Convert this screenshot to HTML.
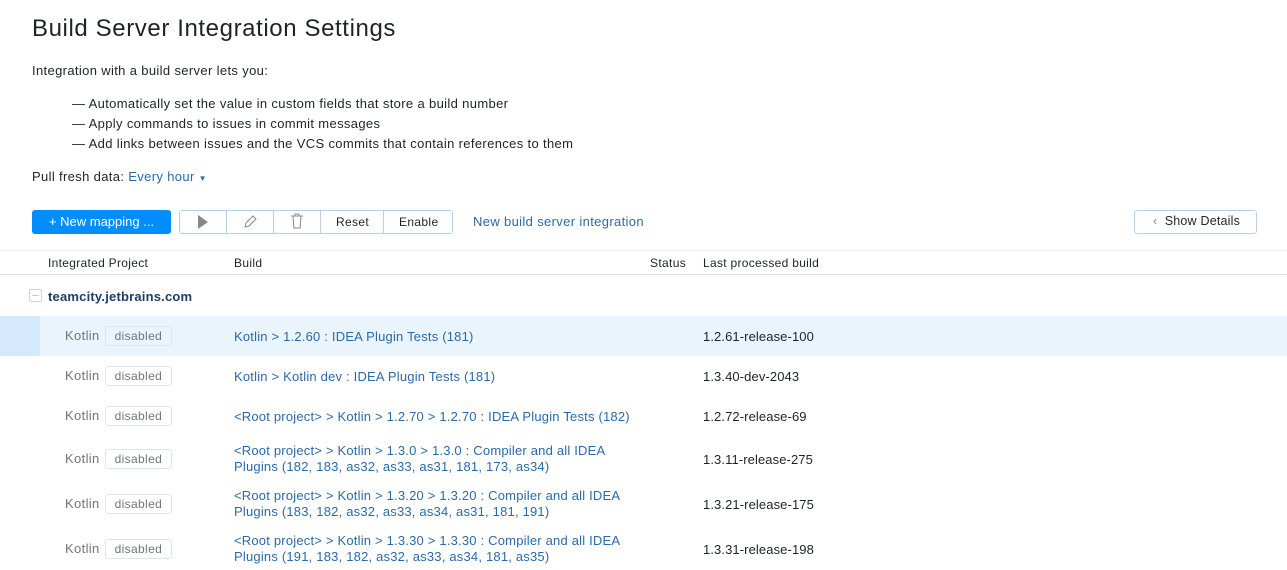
<!DOCTYPE html><html><head><style>
body{margin:0;width:1287px;height:570px;overflow:hidden;background:#fff;font-family:"Liberation Sans",sans-serif;color:#1f2326;font-size:13px;letter-spacing:0.35px}
.a{position:absolute;white-space:nowrap}
h1{position:absolute;left:32px;top:15px;margin:0;font-weight:normal;font-size:24px;letter-spacing:0.6px;color:#1f2326}
.lnk{color:#2a6aa8}
.btn{position:absolute;top:210px;height:22px;border:1px solid #b8cfe4;border-radius:3px;box-sizing:border-box}
.row{position:absolute;left:0;width:1287px}
.dis{display:inline-block;border:1px solid #dfe5eb;border-radius:3px;padding:2px 9px;color:#737577;margin-left:5px;font-size:12px}
.proj{position:absolute;left:65px;color:#737577}
.bd{position:absolute;left:234px;color:#2a6aa8;line-height:16px;letter-spacing:0.2px}
.lp{position:absolute;left:703px;letter-spacing:0.1px}
</style></head><body>
<h1>Build Server Integration Settings</h1>
<div class="a" style="left:32px;top:63px">Integration with a build server lets you:</div>
<div class="a" style="left:72px;top:96px">— Automatically set the value in custom fields that store a build number</div>
<div class="a" style="left:72px;top:116px">— Apply commands to issues in commit messages</div>
<div class="a" style="left:72px;top:136px">— Add links between issues and the VCS commits that contain references to them</div>
<div class="a" style="left:32px;top:169px">Pull fresh data: <span class="lnk">Every hour <span style="font-size:8px">▼</span></span></div>
<div class="a" style="left:32px;top:210px;width:139px;height:24px;background:#008eff;border-radius:3px;color:#fff;line-height:24px;text-align:center;letter-spacing:0">+ New mapping ...</div>
<div class="btn" style="left:179px;width:274px;height:24px"></div>
<div class="a" style="left:226px;top:211px;width:1px;height:22px;background:#b8cfe4"></div>
<div class="a" style="left:273px;top:211px;width:1px;height:22px;background:#b8cfe4"></div>
<div class="a" style="left:320px;top:211px;width:1px;height:22px;background:#b8cfe4"></div>
<div class="a" style="left:383px;top:211px;width:1px;height:22px;background:#b8cfe4"></div>
<svg class="a" style="left:196px;top:214px" width="14" height="16"><path d="M2 1L12 8L2 15Z" fill="#888"/></svg>
<svg class="a" style="left:242px;top:214px" width="16" height="16"><path d="M3 13L4 9L11 2L14 5L7 12Z" fill="none" stroke="#888"/></svg>
<svg class="a" style="left:290px;top:213px" width="14" height="16"><path d="M1 3H13M5 3V1H9V3M3 3L4 15H10L11 3" fill="none" stroke="#888"/></svg>
<div class="a" style="left:336px;top:215px;font-size:12px">Reset</div>
<div class="a" style="left:399px;top:215px;font-size:12px">Enable</div>
<div class="a lnk" style="left:473px;top:214px">New build server integration</div>
<div class="btn" style="left:1134px;width:123px;height:24px"></div>
<div class="a" style="left:1153px;top:214px;font-size:12.5px;letter-spacing:0.2px"><span style="color:#888">‹</span>&nbsp; Show Details</div>
<div class="a" style="left:0;top:250px;width:1287px;height:1px;background:#f2f2f2"></div>
<div class="a" style="left:48px;top:256px;font-size:12px;letter-spacing:0.3px">Integrated Project</div>
<div class="a" style="left:234px;top:256px;font-size:12px">Build</div>
<div class="a" style="left:650px;top:256px;font-size:12px">Status</div>
<div class="a" style="left:703px;top:256px;font-size:12px;letter-spacing:0.3px">Last processed build</div>
<div class="a" style="left:0;top:274px;width:1287px;height:1px;background:#dfe2ea"></div>
<div class="a" style="left:29px;top:289px;width:13px;height:13px;border:1px solid #d0d4d8;border-radius:2px;box-sizing:border-box"><div style="margin:5px 2px;height:1px;background:#ccc"></div></div>
<div class="a" style="left:48px;top:289px;font-weight:bold;color:#1e3e66;letter-spacing:0.2px">teamcity.jetbrains.com</div>
<div class="a" style="left:0;top:316px;width:1287px;height:40px;background:#e9f4fd"></div>
<div class="a" style="left:0;top:316px;width:40px;height:40px;background:#d4e9fb"></div>
<div class="row" style="top:326px"><div class="proj">Kotlin<span class="dis">disabled</span></div><div class="bd" style="top:3px">Kotlin &gt; 1.2.60 : IDEA Plugin Tests (181)</div><div class="lp" style="top:3px">1.2.61-release-100</div></div>
<div class="row" style="top:366px"><div class="proj">Kotlin<span class="dis">disabled</span></div><div class="bd" style="top:3px">Kotlin &gt; Kotlin dev : IDEA Plugin Tests (181)</div><div class="lp" style="top:3px">1.3.40-dev-2043</div></div>
<div class="row" style="top:406px"><div class="proj">Kotlin<span class="dis">disabled</span></div><div class="bd" style="top:3px">&lt;Root project&gt; &gt; Kotlin &gt; 1.2.70 &gt; 1.2.70 : IDEA Plugin Tests (182)</div><div class="lp" style="top:3px">1.2.72-release-69</div></div>
<div class="row" style="top:449px"><div class="proj">Kotlin<span class="dis">disabled</span></div><div class="bd" style="top:-6px">&lt;Root project&gt; &gt; Kotlin &gt; 1.3.0 &gt; 1.3.0 : Compiler and all IDEA<br>Plugins (182, 183, as32, as33, as31, 181, 173, as34)</div><div class="lp" style="top:3px">1.3.11-release-275</div></div>
<div class="row" style="top:494px"><div class="proj">Kotlin<span class="dis">disabled</span></div><div class="bd" style="top:-6px">&lt;Root project&gt; &gt; Kotlin &gt; 1.3.20 &gt; 1.3.20 : Compiler and all IDEA<br>Plugins (183, 182, as32, as33, as34, as31, 181, 191)</div><div class="lp" style="top:3px">1.3.21-release-175</div></div>
<div class="row" style="top:539px"><div class="proj">Kotlin<span class="dis">disabled</span></div><div class="bd" style="top:-6px">&lt;Root project&gt; &gt; Kotlin &gt; 1.3.30 &gt; 1.3.30 : Compiler and all IDEA<br>Plugins (191, 183, 182, as32, as33, as34, 181, as35)</div><div class="lp" style="top:3px">1.3.31-release-198</div></div>
</body></html>
